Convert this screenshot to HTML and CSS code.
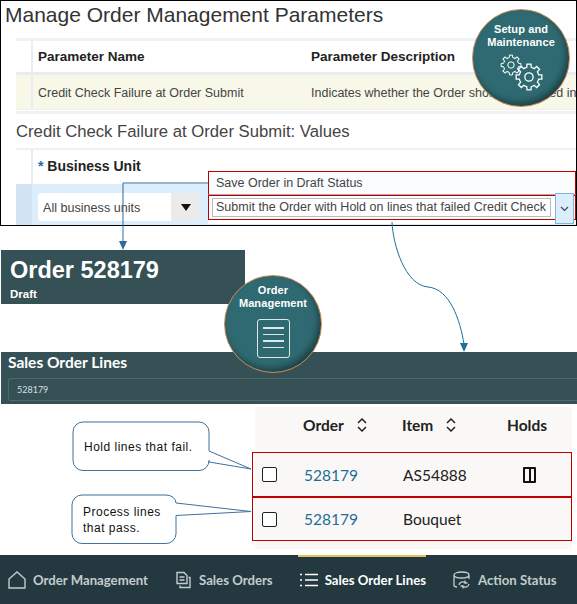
FILE: index.html
```html
<!DOCTYPE html>
<html lang="en">
<head>
    <meta charset="UTF-8">
    <meta name="viewport" content="width=device-width, initial-scale=1.0">
    <title>Credit Check Failure at Order Submit</title>
    <link rel="stylesheet" href="styles.css">
</head>
<body>
<div class="page">
    <section class="setup-shot">
        <h1 class="page-title">Manage Order Management Parameters</h1>
        <div class="param-head">
            <div class="param-name">Parameter Name</div>
            <div class="param-desc">Parameter Description</div>
        </div>
        <div class="param-row">
            <div class="param-name">Credit Check Failure at Order Submit</div>
            <div class="param-desc">Indicates whether the Order should be placed in</div>
        </div>
        <h2 class="values-title">Credit Check Failure at Order Submit: Values</h2>
        <div class="values-head"><span class="star">*</span> Business Unit</div>
        <div class="values-row">
            <div class="select">
                <span class="select-text">All business units</span>
                <span class="select-btn"><span class="select-arrow"></span></span>
            </div>
        </div>
        <div class="dropdown">
            <div class="drop-item">Save Order in Draft Status</div>
            <div class="drop-current">
                <span class="drop-text">Submit the Order with Hold on lines that failed Credit Check</span>
                <span class="drop-btn">
                    <svg width="9" height="6" viewBox="0 0 9 6"><path d="M1 1l3.5 3.5L8 1" fill="none" stroke="#445" stroke-width="1.2"/></svg>
                </span>
            </div>
        </div>
    </section>

    <section class="order-banner">
        <div class="order-no">Order 528179</div>
        <div class="order-status">Draft</div>
    </section>

    <section class="lines-bar">
        <div class="lines-title">Sales Order Lines</div>
        <div class="lines-search">528179</div>
    </section>

    <section class="lines-table">
        <div class="tbl-row tbl-head">
            <div></div>
            <div class="tbl-th">Order
                <svg class="sort" width="10" height="14" viewBox="0 0 10 14"><path d="M1 5l4-4 4 4M1 9l4 4 4-4" fill="none" stroke="#222" stroke-width="1.5"/></svg>
            </div>
            <div class="tbl-th">Item
                <svg class="sort" width="10" height="14" viewBox="0 0 10 14"><path d="M1 5l4-4 4 4M1 9l4 4 4-4" fill="none" stroke="#222" stroke-width="1.5"/></svg>
            </div>
            <div class="tbl-th">Holds</div>
        </div>
        <div class="tbl-row tbl-line">
            <div><span class="check"></span></div>
            <div class="order-link">528179</div>
            <div>AS54888</div>
            <div class="hold-cell"><span class="hold-icon"></span></div>
        </div>
        <div class="tbl-row tbl-line">
            <div><span class="check"></span></div>
            <div class="order-link">528179</div>
            <div>Bouquet</div>
            <div></div>
        </div>
    </section>

    <nav class="bottom-nav">
        <a class="nav-item">
            <svg width="18" height="18" viewBox="0 0 18 18"><path d="M1 17V8l8-7 8 7v9z" fill="none" stroke="#c3cccd" stroke-width="1.4"/></svg>
            Order Management
        </a>
        <a class="nav-item">
            <svg width="17" height="18" viewBox="0 0 16 18"><path d="M1.500 1.500h7l3 3v8h-10zM4 6h5M4 9h5M13 6.500h1.500v10h-10v-2" fill="none" stroke="#c3cccd" stroke-width="1.4"/></svg>
            Sales Orders
        </a>
        <a class="nav-item nav-active">
            <svg width="18" height="14" viewBox="0 0 18 14"><path d="M0 1.500h2M5 1.500h13M0 7h2M5 7h13M0 12.500h2M5 12.500h13" fill="none" stroke="#fff" stroke-width="1.6"/></svg>
            Sales Order Lines
        </a>
        <a class="nav-item">
            <svg width="18" height="18" viewBox="0 0 18 18"><path d="M1 4c0-4 15-4 15 0s-15 4-15 0v10c0 1 1 2 3 2M16 4v4M6 14a3.500 3.500 0 0 1 6-2M16 13a3.500 3.500 0 0 1-6 2M12 9.500V12h2.500M10 17.500V15H7.500" fill="none" stroke="#c3cccd" stroke-width="1.3"/></svg>
            Action Status
        </a>
    </nav>

    <!-- connectors and callout outlines drawn over the shots -->
    <svg class="overlay" width="577" height="604" viewBox="0 0 577 604">
        <path d="M208 183H123V243" fill="none" stroke="#2f6b9a" stroke-width="1"/>
        <path d="M119 241h8l-4 9z" fill="#2f6b9a"/>
        <path d="M392 222C393 245 405 285 428 287C450 289 460 320 464 344" fill="none" stroke="#1a719c" stroke-width="1"/>
        <path d="M460 343h8l-4 9z" fill="#1a719c"/>
        <path d="M83 422H199a10 10 0 0 1 10 10V451L251 469L209 462V460.500a10 10 0 0 1-10 10H83a10 10 0 0 1-10-10V432a10 10 0 0 1 10-10z" fill="#fff" stroke="#41719c"/>
        <path d="M82 495H166a10 8 0 0 1 10 8L251 511.500L176 515.500V534a10 10 0 0 1-10 9.500H82a10 10 0 0 1-10-10V505a10 10 0 0 1 10-10z" fill="#fff" stroke="#41719c"/>
    </svg>

    <div class="callout callout-hold">Hold lines that fail.</div>
    <div class="callout callout-process">Process lines<br>that pass.</div>

    <div class="badge badge-setup">
        <div class="badge-label">Setup and<br>Maintenance</div>
        <svg width="46" height="40" viewBox="0 0 46 40">
            <defs>
                <path id="tooth" d="M7.020 -2.910L7.410 -1.710L9.880 -1.560L9.880 1.560L7.410 1.710L7.020 2.910"/>
                <g id="gear" fill="none" stroke="#fff" stroke-width="1">
                    <use href="#tooth"/>
                    <use href="#tooth" transform="rotate(45)"/>
                    <use href="#tooth" transform="rotate(90)"/>
                    <use href="#tooth" transform="rotate(135)"/>
                    <use href="#tooth" transform="rotate(180)"/>
                    <use href="#tooth" transform="rotate(225)"/>
                    <use href="#tooth" transform="rotate(270)"/>
                    <use href="#tooth" transform="rotate(315)"/>
                    <circle r="3.200"/>
                </g>
            </defs>
            <use href="#gear" transform="translate(13 13)"/>
            <use href="#gear" transform="translate(31 25) scale(1.300)"/>
        </svg>
    </div>

    <div class="badge badge-order">
        <div class="badge-label">Order<br>Management</div>
        <div class="doc-icon">
            <span></span><span></span><span></span><span></span>
        </div>
    </div>
</div>
</body>
</html>
```

FILE: styles.css
```css
*{
    margin: 0;
    padding: 0;
    box-sizing: border-box;
}
body{
    background-color: #fff;
    font-family: "Liberation Sans", Arial, sans-serif;
}
.page{
    position: relative;
    width: 577px;
    height: 604px;
    overflow: hidden;
}

/* setup screenshot */
.setup-shot{
    position: relative;
    height: 226px;
    border: 1px solid #000;
    overflow: hidden;
}
.page-title{
    height: 37px;
    padding-left: 4px;
    font-size: 21px;
    line-height: 28px;
    font-weight: normal;
    color: #333;
}
.param-head, .param-row, .values-head{
    margin-left: 15px;
    padding-left: 22px;
    background-image: linear-gradient(#e6edf5, #e6edf5);
    background-size: 2px 100%;
    background-position: 15px 0;
    background-repeat: no-repeat;
}
.param-head, .param-row{
    display: flex;
    align-items: center;
}
.param-head{
    height: 37px;
    border-top: 3px solid #eef2f7;
    border-bottom: 3px solid #e8edf3;
    font-size: 13.500px;
    font-weight: bold;
    color: #222;
}
.param-row{
    height: 35px;
    padding-top: 1px;
    background-color: #f8f8e9;
    border-bottom: 1px solid #eee;
    font-size: 12.500px;
    color: #444;
    white-space: nowrap;
}
.param-name{
    flex: 0 0 273px;
}
.values-title{
    margin: 1px 0 0 15px;
    padding-top: 8px;
    height: 39px;
    border-top: 3px solid #eef2f7;
    border-bottom: 2px solid #eef2f7;
    font-size: 16.700px;
    line-height: 19px;
    font-weight: normal;
    color: #444;
}
.values-head{
    height: 34px;
    font-size: 14px;
    line-height: 32px;
    font-weight: bold;
    color: #222;
}
.star{
    color: #1a6fa8;
}
.values-row{
    height: 42px;
    margin-left: 15px;
    padding: 9px 0 0 22px;
    background-color: #dcedfb;
    background-image: linear-gradient(#d3e5f5, #d3e5f5);
    background-size: 16px 100%;
    background-repeat: no-repeat;
}
.select{
    display: flex;
    width: 162px;
    height: 28px;
    background-color: #fff;
    border-radius: 3px;
    font-size: 12.600px;
    color: #444;
}
.select-text{
    flex: 1;
    padding-left: 5px;
    line-height: 30px;
}
.select-btn{
    display: flex;
    align-items: center;
    justify-content: center;
    width: 29px;
    background-color: #ebebeb;
    border-radius: 0 3px 3px 0;
}
.select-arrow{
    border-top: 7px solid #111;
    border-left: 5px solid transparent;
    border-right: 5px solid transparent;
}
.dropdown{
    position: absolute;
    left: 207px;
    top: 170px;
    width: 368px;
    padding-bottom: 4px;
    font-size: 12.500px;
    color: #444;
    background-color: #fff;
}
.drop-item{
    height: 24px;
    padding-left: 7px;
    line-height: 23px;
    background-color: #fbfcfe;
    border: 1px solid #c00000;
    border-bottom-color: #aaa;
}
.drop-current{
    display: flex;
    height: 25px;
    padding: 2px 0 2px 3px;
    border: 1px solid #c00000;
}
.drop-text{
    flex: 1;
    padding-left: 3px;
    line-height: 17px;
    border: 1px solid #bbb;
    white-space: nowrap;
}
.drop-btn{
    display: flex;
    align-items: center;
    justify-content: center;
    width: 19px;
    margin: -5px 1px -7px 4px;
    background-color: #dcedfb;
    border: 1px solid #7db4e0;
}

/* order header */
.order-banner{
    width: 244px;
    height: 54px;
    margin: 24px 0 0 1px;
    padding: 7px 0 0 9px;
    background-color: #355156;
    color: #fff;
    font-weight: bold;
}
.order-no{
    font-size: 23.500px;
    line-height: 27px;
}
.order-status{
    margin-top: 3px;
    font-size: 11.500px;
    line-height: 14px;
}
.lines-bar{
    height: 52px;
    margin: 48px 0 0 1px;
    padding: 0 0 0 7px;
    background-color: #355156;
    font-family: Lato, sans-serif;
    color: #fff;
}
.lines-title{
    font-size: 15.500px;
    line-height: 20px;
    font-weight: bold;
}
.lines-search{
    height: 23px;
    margin-top: 6px;
    padding-left: 8px;
    border: 1px solid #4f686c;
    border-right: 0;
    border-radius: 3px 0 0 3px;
    font-size: 9px;
    line-height: 21px;
    color: #d8dfe0;
}

/* lines table */
.lines-table{
    width: 317px;
    height: 142px;
    margin: 3px 0 0 255px;
    background-color: #faf8f6;
    font-family: Lato, sans-serif;
    font-size: 15.500px;
    color: #222;
}
.tbl-row{
    display: grid;
    grid-template-columns: 41px 99px 105px 1fr;
    align-items: center;
    padding-left: 7px;
}
.tbl-head{
    height: 45px;
    padding-bottom: 9px;
}
.tbl-th{
    display: flex;
    align-items: center;
    gap: 13px;
    font-weight: bold;
}
.tbl-line{
    height: 45px;
    margin-left: -3px;
    padding-left: 10px;
    border: 1px solid #c00000;
}
.tbl-line + .tbl-line{
    margin-top: -1px;
    border-top-width: 2px;
}
.check{
    display: block;
    width: 15px;
    height: 15px;
    margin-left: -1px;
    border: 1.500px solid #222;
    border-radius: 2px;
    background-color: #fff;
}
.order-link{
    color: #1f6e96;
}
.hold-cell{
    padding-left: 15px;
}
.hold-icon{
    display: flex;
    width: 13px;
    height: 16px;
    border: 2px solid #111;
    border-radius: 1px;
    justify-content: center;
}
.hold-icon::after{
    content: "";
    width: 2px;
    background-color: #111;
}

/* bottom navigation */
.bottom-nav{
    position: relative;
    display: flex;
    align-items: center;
    gap: 27px;
    height: 49px;
    margin-top: 6px;
    padding: 1px 0 0 8px;
    background-color: #24393f;
    font-family: Lato, sans-serif;
    font-size: 13.200px;
    font-weight: bold;
    color: #c3cccd;
    white-space: nowrap;
}
.nav-item{
    display: flex;
    align-items: center;
    gap: 7px;
}
.nav-active{
    color: #fff;
}
.nav-active::before{
    content: "";
    position: absolute;
    top: 0;
    left: 298px;
    width: 128px;
    height: 2px;
    background-color: #e8bf5f;
}

/* overlays */
.overlay{
    position: absolute;
    left: 0;
    top: 0;
}
.callout{
    position: absolute;
    font-size: 12px;
    line-height: 16px;
    letter-spacing: .5px;
    color: #111;
}
.callout-hold{
    left: 84px;
    top: 439px;
}
.callout-process{
    left: 83px;
    top: 504px;
}
.badge{
    position: absolute;
    display: flex;
    flex-direction: column;
    align-items: center;
    width: 98px;
    height: 98px;
    padding-top: 13px;
    border: 1px solid #c98a52;
    border-radius: 50%;
    background: radial-gradient(circle at 42% 42%, #2f6a72 0%, #2f6a72 68%, #1f4a50 100%);
    box-shadow: inset -3px -4px 6px rgba(0, 0, 0, .35);
    color: #fff;
    text-align: center;
}
.badge-setup{
    left: 472px;
    top: 9px;
}
.badge-order{
    left: 224px;
    top: 275px;
    padding-top: 8px;
}
.badge-label{
    font-size: 11px;
    line-height: 13px;
    font-weight: bold;
    letter-spacing: .1px;
}
.badge-setup svg{
    margin-top: 3px;
}
.doc-icon{
    display: flex;
    flex-direction: column;
    gap: 5px;
    width: 33px;
    height: 39px;
    margin-top: 9px;
    padding: 7px 5px 0;
    border: 1.500px solid #dfe8e9;
    border-radius: 3px;
}
.doc-icon span{
    height: 1.500px;
    background-color: #dfe8e9;
}
```
